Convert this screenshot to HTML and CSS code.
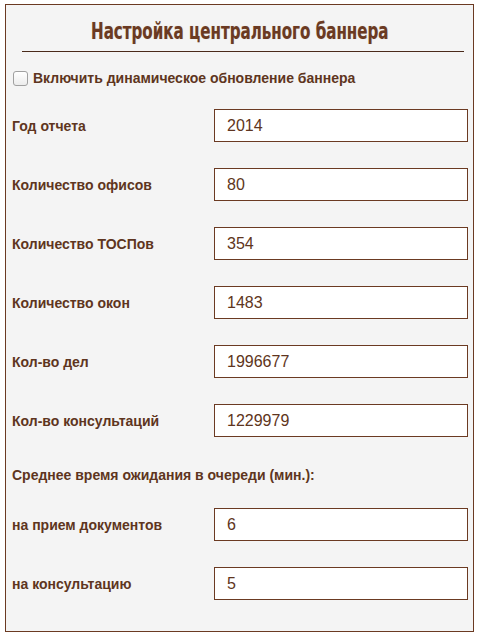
FILE: index.html
```html
<!DOCTYPE html>
<html lang="ru">
<head>
<meta charset="utf-8">
<title>Настройка центрального баннера</title>
<link rel="stylesheet" href="styles.css">
</head>
<body>
<div class="panel">
  <h1 class="title"><span class="title-text">Настройка центрального баннера</span></h1>
  <hr class="rule">
  <label class="check-row"><input type="checkbox" class="check"><span>Включить динамическое обновление баннера</span></label>
  <div class="fields">
    <div class="row"><span class="label">Год отчета</span><input class="field" type="text" value="2014"></div>
    <div class="row"><span class="label">Количество офисов</span><input class="field" type="text" value="80"></div>
    <div class="row"><span class="label">Количество ТОСПов</span><input class="field" type="text" value="354"></div>
    <div class="row"><span class="label">Количество окон</span><input class="field" type="text" value="1483"></div>
    <div class="row"><span class="label">Кол-во дел</span><input class="field" type="text" value="1996677"></div>
    <div class="row"><span class="label">Кол-во консультаций</span><input class="field" type="text" value="1229979"></div>
    <div class="subhead">Среднее время ожидания в очереди (мин.):</div>
    <div class="row"><span class="label">на прием документов</span><input class="field" type="text" value="6"></div>
    <div class="row"><span class="label">на консультацию</span><input class="field" type="text" value="5"></div>
  </div>
</div>
</body>
</html>
```
FILE: styles.css
```css
html, body {
  margin: 0;
  padding: 0;
  background: #ffffff;
}
body {
  padding: 4px 4px 0 5px;
  font-family: "Liberation Sans", Arial, sans-serif;
  color: #5e3520;
}
.panel {
  box-sizing: border-box;
  width: 469px;
  height: 628px;
  border: 1px solid #6b3a22;
  background: #f4f4f4;
  padding: 0 5px 0 6px;
}
.title {
  margin: 0;
  padding-top: 13px;
  height: 33px;
  text-align: center;
  font-family: "DejaVu Sans Condensed", "DejaVu Sans", sans-serif;
  font-stretch: condensed;
  font-weight: bold;
  font-size: 23px;
  line-height: 26px;
  color: #6b3a22;
  text-shadow: 0 0 1px rgba(107, 58, 34, 0.3);
  white-space: nowrap;
}
.title-text {
  display: inline-block;
  transform: scaleX(0.73);
  transform-origin: center;
}
.rule {
  margin: 0 4px 0 10px;
  border: 0;
  height: 1px;
  background: #4a2a1a;
}
.check-row {
  display: flex;
  align-items: center;
  gap: 5px;
  margin-top: 18px;
  margin-left: 1px;
  font-weight: bold;
  font-size: 14px;
  line-height: 16px;
}
.check {
  appearance: none;
  -webkit-appearance: none;
  margin: 0;
  width: 15px;
  height: 15px;
  border: 1px solid #a0a0a0;
  border-radius: 3px;
  background: linear-gradient(#ffffff, #ececec);
  flex: none;
}
.fields {
  display: flex;
  flex-direction: column;
  gap: 26px;
  margin-top: 23px;
}
.row {
  display: flex;
  align-items: center;
  justify-content: space-between;
  height: 33px;
}
.label {
  font-weight: bold;
  font-size: 14px;
}
.subhead {
  font-weight: bold;
  font-size: 14px;
  line-height: 16px;
  margin: 4px 0 -1px;
}
.field {
  box-sizing: border-box;
  width: 254px;
  height: 33px;
  margin: 0;
  border: 1px solid #6b3a22;
  background: #ffffff;
  padding: 0 12px;
  font-family: "Liberation Sans", Arial, sans-serif;
  font-size: 16px;
  color: #5e3520;
  outline: none;
}
```
